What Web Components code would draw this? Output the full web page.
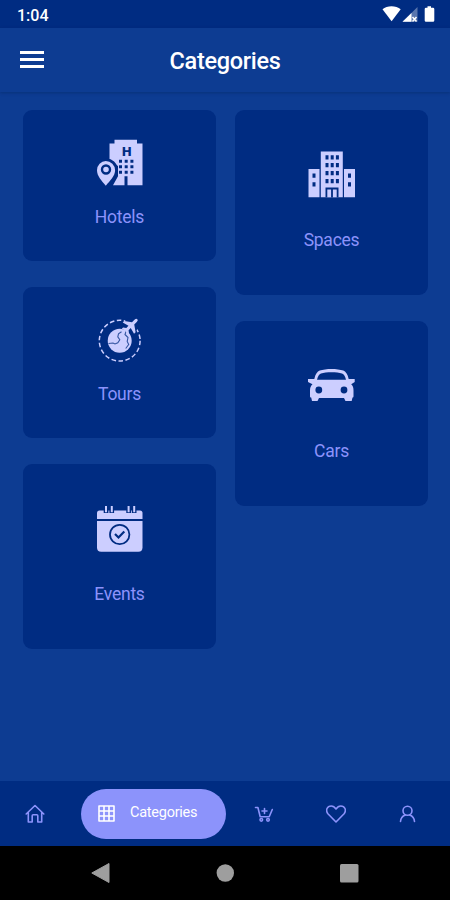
<!DOCTYPE html>
<html lang="en">
<head>
<meta charset="utf-8">
<title>Categories</title>
<style>
  body {
    margin: 0;
    font-family: Roboto, "Noto Sans", sans-serif;
    --dark: #002c82;
    --main: #0d3c92;
    --accent: #8c93fb;
    --light: #ccceff;
  }
</style>
</head>
<body>
<phone-screen>
  <status-bar slot="top" time="1:04"></status-bar>
  <app-bar slot="top">Categories</app-bar>
  <category-card slot="left" icon="hotel">Hotels</category-card>
  <category-card slot="left" icon="tour">Tours</category-card>
  <category-card slot="left" icon="event" tall>Events</category-card>
  <category-card slot="right" icon="space" tall>Spaces</category-card>
  <category-card slot="right" icon="car" tall>Cars</category-card>
  <tab-bar slot="bottom">Categories</tab-bar>
  <system-bar slot="bottom"></system-bar>
</phone-screen>

<script>
const icons = {
  hotel: `
    <path d="M14 4.500h5V.7h22.500v3.800H47v41.800H32v-9h-3v9H17.500l5-9V27L14 21z"/>
    <path class="cut" d="M10.500 19.500a11 11 0 0 1 11.500 11c0 6-4 11-7 16H7z"/>
    <path d="M10.300 22a9.300 9.300 0 0 1 9.300 9.200c0 5.800-5 10.300-9.300 15.500C6 41.500 1.500 37 1.500 31.200A9 9.300 0 0 1 10.300 22z"/>
    <circle class="line" cx="10.500" cy="30.500" r="4" stroke-width="2.400"/>
    <text class="cut" x="31" y="17" text-anchor="middle" font-size="13.500" font-weight="900">H</text>
    <path class="cut" d="M23.500 20.700h3v3h-3zM29.200 20.700h3v3h-3zM34.900 20.700h3v3h-3zM23.500 26.200h3v3h-3zM29.200 26.200h3v3h-3zM34.900 26.200h3v3h-3zM23.500 31.700h3v3h-3zM29.200 31.700h3v3h-3zM34.900 31.700h3v3h-3z"/>`,
  space: `
    <path d="M13.300.5h22v45.800h-22zM1 18h11v28.300H1zM36.500 18h11v28.300h-11z"/>
    <path class="cut" d="M18 4.200h3v4.300h-3zM23.200 4.200h3v4.300h-3zM28.400 4.200h3v4.300h-3zM18 12h3v4.300h-3zM23.200 12h3v4.300h-3zM28.400 12h3v4.300h-3zM18 20h3v4.300h-3zM23.200 20h3v4.300h-3zM28.400 20h3v4.300h-3zM18 28h3v4.300h-3zM23.200 28h3v4.300h-3zM28.400 28h3v4.300h-3zM5 22.500h3v4.300H5zM5 31.200h3v4.300H5zM40.500 22.500h3v4.300h-3zM40.500 31.200h3v4.300h-3zM18 36.500h13v9.800H18z"/>
    <path d="M19.800 38.500h3.800v7.800h-3.800zM25.400 38.500h3.800v7.800h-3.800z"/>`,
  tour: `
    <circle cx="24.200" cy="24.700" r="20.400" fill="none" stroke="#ccceff" stroke-width="1.500" stroke-dasharray="4.600 2.520"/>
    <circle cx="24.200" cy="24.700" r="12"/>
    <path class="line" stroke-width="1.100" opacity=".75" d="M13 27.500l4.500-.5 2 1 2.800-1.200 2-3-2-3 .7-3 3-2M30.500 15.500l-1 3 3 3-.8 4 1.500 3-3 4"/>
    <circle class="cut" cx="35.500" cy="9.500" r="7.500"/>
    <path transform="translate(35.500 9.500) rotate(45)" d="M0-9q1.600 0 1.600 2.500V-3L8 1.500v2.200L1.600 2v3l2.600 2v1.800L0 7.800l-4.200 1V7l2.600-2V2L-8 3.700V1.500L-1.600-3v-3.500Q-1.600-9 0-9z"/>`,
  event: `
    <path d="M4 5.500h40.500q2.500 0 2.500 2.500v34.500q0 4.200-4.200 4.200H5.700q-4.200 0-4.200-4.200V8q0-2.500 2.500-2.500z"/>
    <path class="cut" d="M1 14h46.500v1.900H1zM8.200 4h4.700v4H8.200zM13.900 4h4.700v4h-4.700zM30.800 4h4.700v4h-4.700zM36.300 4h4.700v4h-4.700z"/>
    <path d="M9.500 1h2v6.300h-2zM15.300 1h2v6.300h-2zM32.100 1h2v6.300h-2zM37.700 1h2v6.300h-2z"/>
    <circle class="line" cx="24.200" cy="29.500" r="9.700" stroke-width="1.800"/>
    <path class="line" stroke-width="2.200" d="M19.500 29l3.500 3.500 5.800-6"/>`,
  car: `
    <path fill-rule="evenodd" d="M.5 17h6.300c1.200-5 3-7.500 5.400-8.400 6-2.300 17.600-2.300 23.600 0 2.400.9 4.200 3.400 5.400 8.400h6v3l-3.500 2.300c1.800 1.600 2.300 3.500 2.300 6.200v5.500c0 1-.3 1.500-1 1.500l-.8 3.500H38l-1.500-3h-25L10 39H4.500l-.8-3.500c-.9 0-1.200-.5-1.200-1.500v-5.500c0-2.700.7-4.600 2.500-6.200L.5 20zM9.500 17.700h29c-1-4-2-5.700-4-6.300-5-1.600-16-1.600-21 0-2 .6-3 2.300-4 6.300z"/>
    <circle class="cut" cx="11.300" cy="28" r="3.400"/>
    <circle class="cut" cx="36.500" cy="28" r="3.400"/>`
};

class PhoneScreen extends HTMLElement {
  constructor() {
    super();
    this.attachShadow({ mode: 'open' });
  }
  connectedCallback() {
    this.shadowRoot.innerHTML = `
      <style>
        :host {
          display: flex;
          flex-direction: column;
          width: 450px;
          height: 900px;
          overflow: hidden;
          background: var(--main);
        }
        main {
          flex: 1;
          display: grid;
          grid-template-columns: 193px 193px;
          align-items: start;
          gap: 19px;
          padding: 18px 22px 0 23px;
        }
        .column {
          display: flex;
          flex-direction: column;
          gap: 26px;
        }
      </style>
      <slot name="top"></slot>
      <main>
        <div class="column"><slot name="left"></slot></div>
        <div class="column"><slot name="right"></slot></div>
      </main>
      <slot name="bottom"></slot>
    `;
  }
}

class StatusBar extends HTMLElement {
  constructor() {
    super();
    this.attachShadow({ mode: 'open' });
  }
  connectedCallback() {
    this.shadowRoot.innerHTML = `
      <style>
        :host {
          display: flex;
          justify-content: space-between;
          box-sizing: border-box;
          height: 28px;
          padding: 6px 15px 0 17px;
          background: var(--dark);
          color: #fff;
          font-size: 16px;
          font-weight: 500;
          line-height: 19px;
        }
        svg { display: block; }
      </style>
      <span>${this.getAttribute('time')}</span>
      <svg width="53" height="17" fill="#fff">
        <path d="M.5 3.200C5-.7 14-.7 18.700 3.200L9.600 15.300z"/>
        <path d="M35.500 1v14.800H20.500z" opacity=".35"/>
        <path d="M29.500 7v8.800h-9z"/>
        <path d="M30.500 11l4 4.500m0-4.500l-4 4.500" stroke="#fff" stroke-width="1.500"/>
        <path d="M45.500 1.700V.2h3.500v1.500h2q1.300 0 1.300 1.300v11.500q0 1.300-1.300 1.300h-7q-1.300 0-1.300-1.300V3q0-1.300 1.300-1.300z"/>
      </svg>
    `;
  }
}

class AppBar extends HTMLElement {
  constructor() {
    super();
    this.attachShadow({ mode: 'open' });
  }
  connectedCallback() {
    this.shadowRoot.innerHTML = `
      <style>
        :host {
          display: grid;
          grid-template-columns: 24px 1fr 24px;
          align-items: center;
          box-sizing: border-box;
          height: 64px;
          padding: 0 20px;
          background: var(--main);
          color: #fff;
          box-shadow: 0 1px 3px rgba(0, 35, 90, .45);
        }
        h1 {
          margin: 2px 0 0;
          text-align: center;
          font-size: 23.500px;
          font-weight: 500;
          letter-spacing: -.3px;
          line-height: 30px;
        }
      </style>
      <svg width="24" height="18" fill="#fff"><path d="M0 0h24v3H0zM0 7h24v3H0zM0 14h24v3H0z"/></svg>
      <h1><slot></slot></h1>
    `;
  }
}

class CategoryCard extends HTMLElement {
  constructor() {
    super();
    this.attachShadow({ mode: 'open' });
  }
  connectedCallback() {
    this.shadowRoot.innerHTML = `
      <style>
        :host {
          display: flex;
          flex-direction: column;
          align-items: center;
          box-sizing: border-box;
          height: 151px;
          padding-top: 29px;
          gap: 20px;
          border-radius: 9px;
          background: var(--dark);
          color: var(--accent);
          font-size: 17.500px;
          letter-spacing: -.25px;
          line-height: 20px;
        }
        :host([tall]) {
          height: 185px;
          padding-top: 41px;
          gap: 31px;
        }
        svg { fill: var(--light); }
        .cut { fill: var(--dark); }
        .line { fill: none; stroke: var(--dark); }
      </style>
      <svg width="49" height="48" viewBox="-.5 0 49 48">${icons[this.getAttribute('icon')]}</svg>
      <span><slot></slot></span>
    `;
  }
}

class TabBar extends HTMLElement {
  constructor() {
    super();
    this.attachShadow({ mode: 'open' });
  }
  connectedCallback() {
    this.shadowRoot.innerHTML = `
      <style>
        :host {
          display: flex;
          align-items: center;
          box-sizing: border-box;
          height: 65px;
          padding-left: 25px;
          background: var(--dark);
          color: var(--accent);
        }
        svg {
          display: block;
          fill: none;
          stroke: currentColor;
          stroke-width: 1.600;
          stroke-linejoin: round;
          stroke-linecap: round;
        }
        .active {
          display: flex;
          align-items: center;
          gap: 15px;
          box-sizing: border-box;
          width: 145px;
          height: 50px;
          margin: 0 28px 0 36px;
          padding-left: 17px;
          border-radius: 25px;
          background: var(--accent);
          color: #fff;
          font-size: 14.500px;
          letter-spacing: -.25px;
        }
        .active span { margin-top: -2px; }
        .links {
          display: flex;
          gap: 52px;
        }
      </style>
      <svg width="20" height="20"><path d="M1.200 10L10 1.500l8.800 8.500M3.300 8.500V18h3.900v-6.300q0-1 1-1h3.600q1 0 1 1V18h3.900V8.500"/></svg>
      <div class="active">
        <svg width="17" height="17"><path d="M1 1h15v15H1zM6 1v15M11 1v15M1 6h15M1 11h15"/></svg>
        <span><slot></slot></span>
      </div>
      <div class="links">
        <svg width="20" height="20"><path d="M1.500 3.500h2.400l2.300 9.300h9L18.300 5.500M10.500 4.500v5M8 7h5"/><circle cx="7.300" cy="15.800" r="1.300"/><circle cx="14" cy="15.800" r="1.300"/></svg>
        <svg width="20" height="20"><path d="M10 18L1.900 9.700C-.8 6 1.200 2 5.200 2 7.600 2 9 3.500 10 5c1-1.500 2.400-3 4.800-3 4 0 6 4 3.300 7.700z"/></svg>
        <svg width="20" height="20"><circle cx="9.500" cy="6.800" r="4.500"/><path d="M2.500 17.500c.3-3.600 2-5.500 4.700-6.500M16.500 17.500c-.3-3.600-2-5.500-4.700-6.500"/></svg>
      </div>
    `;
  }
}

class SystemBar extends HTMLElement {
  constructor() {
    super();
    this.attachShadow({ mode: 'open' });
  }
  connectedCallback() {
    this.shadowRoot.innerHTML = `
      <style>
        :host {
          display: flex;
          justify-content: space-between;
          align-items: center;
          box-sizing: border-box;
          height: 54px;
          padding: 0 91px;
          background: #000;
        }
        svg { fill: #9e9e9e; }
      </style>
      <svg width="19" height="20"><path d="M18 .5v19L.8 10z" stroke="#9e9e9e" stroke-linejoin="round"/></svg>
      <svg width="18" height="18"><circle cx="9.300" cy="9" r="8.700"/></svg>
      <svg width="19" height="19"><rect width="18.500" height="18.500" rx="1.500"/></svg>
    `;
  }
}

customElements.define('phone-screen', PhoneScreen);
customElements.define('status-bar', StatusBar);
customElements.define('app-bar', AppBar);
customElements.define('category-card', CategoryCard);
customElements.define('tab-bar', TabBar);
customElements.define('system-bar', SystemBar);
</script>
</body>
</html>
